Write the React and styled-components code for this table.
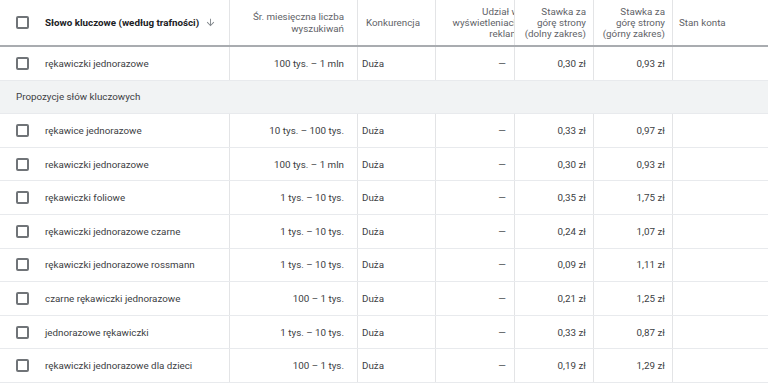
import React from 'react';
import styled, { createGlobalStyle } from 'styled-components';

//? Global styles
const GlobalStyle = createGlobalStyle`
  body {
    margin: 0;
    background: #fff;
    font-family: Roboto, "Liberation Sans", Arial, sans-serif;
  }
`;

const COLUMNS = '230px 128px 78px 79px 79px 79px 1fr';

//? Styling
const Table = styled.div`
  width: 768px;
  overflow: hidden;
`;

const HeaderRow = styled.div`
  display: grid;
  grid-template-columns: ${COLUMNS};
  height: 45px;
  border-bottom: 2px solid #a9acb0;
`;

const HeadCell = styled.div`
  display: flex;
  align-items: center;
  justify-content: ${(p) => (p.$right ? 'flex-end' : 'flex-start')};
  padding: ${(p) => p.$pad || '0 8px'};
  border-right: ${(p) => (p.$last ? 'none' : '1px solid #e3e4e6')};
  overflow: hidden;
  font-size: 9.8px;
  line-height: 11.3px;
  color: #5f6368;
  white-space: nowrap;
  text-align: ${(p) => (p.$right ? 'right' : 'left')};
`;

const HeadText = styled.div`
  white-space: nowrap;
  flex-shrink: 0;
  margin-right: ${(p) => p.$overflow || 0}px;
`;

const MainHead = styled.span`
  font-weight: 700;
  color: #202124;
  font-size: 9.8px;
`;

const SortIcon = styled.svg`
  width: 11px;
  height: 11px;
  margin-left: 6px;
  flex-shrink: 0;
  fill: #80868b;
`;

const Row = styled.div`
  display: grid;
  grid-template-columns: ${COLUMNS};
  height: 32.6px;
  border-bottom: 1px solid #e8eaed;
`;

const Cell = styled.div`
  display: flex;
  align-items: center;
  justify-content: ${(p) => (p.$right ? 'flex-end' : 'flex-start')};
  padding: ${(p) => p.$pad || '0 8px'};
  border-right: ${(p) => (p.$last ? 'none' : '1px solid #e3e4e6')};
  font-size: 9.8px;
  color: #3c4043;
  white-space: nowrap;
  overflow: hidden;
`;

const Checkbox = styled.span`
  box-sizing: border-box;
  width: 13px;
  height: 13px;
  border: 2px solid #707478;
  border-radius: 2px;
  margin-right: 16px;
  flex-shrink: 0;
`;

const GroupRow = styled.div`
  display: flex;
  align-items: center;
  height: 32.6px;
  padding: 0 16px;
  background: #f1f3f4;
  border-bottom: 1px solid #e8eaed;
  font-size: 9.8px;
  color: #3c4043;
`;

const top = { kw: 'rękawiczki jednorazowe', vol: '100 tys. – 1 mln', low: '0,30 zł', high: '0,93 zł' };

const ideas = [
  { kw: 'rękawice jednorazowe', vol: '10 tys. – 100 tys.', low: '0,33 zł', high: '0,97 zł' },
  { kw: 'rekawiczki jednorazowe', vol: '100 tys. – 1 mln', low: '0,30 zł', high: '0,93 zł' },
  { kw: 'rękawiczki foliowe', vol: '1 tys. – 10 tys.', low: '0,35 zł', high: '1,75 zł' },
  { kw: 'rękawiczki jednorazowe czarne', vol: '1 tys. – 10 tys.', low: '0,24 zł', high: '1,07 zł' },
  { kw: 'rękawiczki jednorazowe rossmann', vol: '1 tys. – 10 tys.', low: '0,09 zł', high: '1,11 zł' },
  { kw: 'czarne rękawiczki jednorazowe', vol: '100 – 1 tys.', low: '0,21 zł', high: '1,25 zł' },
  { kw: 'jednorazowe rękawiczki', vol: '1 tys. – 10 tys.', low: '0,33 zł', high: '0,87 zł' },
  { kw: 'rękawiczki jednorazowe dla dzieci', vol: '100 – 1 tys.', low: '0,19 zł', high: '1,29 zł' },
];

function KeywordRow({ item }) {
  return (
    <Row>
      <Cell $pad="0 8px 0 16px">
        <Checkbox />
        {item.kw}
      </Cell>
      <Cell $right $pad="0 13px 0 8px">{item.vol}</Cell>
      <Cell $pad="0 4px">Duża</Cell>
      <Cell $right $pad="0 8px">—</Cell>
      <Cell $right $pad="0 7px">{item.low}</Cell>
      <Cell $right $pad="0 7px">{item.high}</Cell>
      <Cell $last />
    </Row>
  );
}

function App() {
  return (
    <>
      <GlobalStyle />
      <Table>
        <HeaderRow>
          <HeadCell $pad="0 8px 0 16px">
            <Checkbox />
            <MainHead>Słowo kluczowe (według trafności)</MainHead>
            <SortIcon viewBox="0 0 24 24">
              <path d="M20 12l-1.41-1.41L13 16.17V4h-2v12.17l-5.58-5.59L4 12l8 8 8-8z" />
            </SortIcon>
          </HeadCell>
          <HeadCell $right $pad="0 13px 0 8px">
            <HeadText>Śr. miesięczna liczba<br />wyszukiwań</HeadText>
          </HeadCell>
          <HeadCell $pad="0 8px">Konkurencja</HeadCell>
          <HeadCell $right $pad="0 4px 0 0">
            <HeadText $overflow={-9}>Udział w<br />wyświetleniach<br />reklam</HeadText>
          </HeadCell>
          <HeadCell $right $pad="0 7px">
            <HeadText>Stawka za<br />górę strony<br />(dolny zakres)</HeadText>
          </HeadCell>
          <HeadCell $right $pad="0 7px">
            <HeadText>Stawka za<br />górę strony<br />(górny zakres)</HeadText>
          </HeadCell>
          <HeadCell $last $pad="0 6px">Stan konta</HeadCell>
        </HeaderRow>
        <KeywordRow item={top} />
        <GroupRow>Propozycje słów kluczowych</GroupRow>
        {ideas.map((item, i) => (
          <KeywordRow key={i} item={item} />
        ))}
      </Table>
    </>
  );
}

export default App;
